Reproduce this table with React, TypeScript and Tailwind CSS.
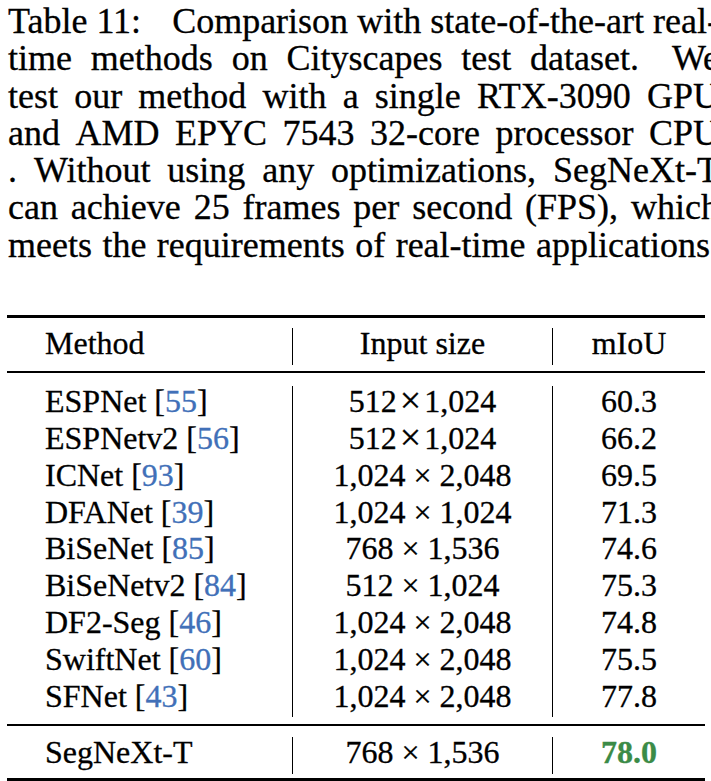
const caption: { words: string[]; wide?: number }[] = [
  { words: ["Table 11:", "Comparison", "with", "state-of-the-art", "real-"], wide: 0 },
  { words: ["time", "methods", "on", "Cityscapes", "test", "dataset.", "We"], wide: 5 },
  { words: ["test", "our", "method", "with", "a", "single", "RTX-3090", "GPU"] },
  { words: ["and", "AMD", "EPYC", "7543", "32-core", "processor", "CPU"] },
  { words: [".", "Without", "using", "any", "optimizations,", "SegNeXt-T"] },
  { words: ["can", "achieve", "25", "frames", "per", "second", "(FPS),", "which"] },
  { words: ["meets", "the", "requirements", "of", "real-time", "applications."] },
];

type Row = { name: string; cite?: string; size: React.ReactNode; miou: string };

const Times = ({ a, b }: { a: string; b: string }) => (
  <>
    {a} × {b}
  </>
);

// math-mode product sign: a touch larger, tighter spacing
const MathTimes = ({ a, b }: { a: string; b: string }) => (
  <>
    {a}
    <span className="mx-[3px] text-[38px] leading-[0px] relative top-[1px]">×</span>
    {b}
  </>
);

const rows: Row[] = [
  { name: "ESPNet", cite: "55", size: <MathTimes a="512" b="1,024" />, miou: "60.3" },
  { name: "ESPNetv2", cite: "56", size: <MathTimes a="512" b="1,024" />, miou: "66.2" },
  { name: "ICNet", cite: "93", size: <Times a="1,024" b="2,048" />, miou: "69.5" },
  { name: "DFANet", cite: "39", size: <Times a="1,024" b="1,024" />, miou: "71.3" },
  { name: "BiSeNet", cite: "85", size: <Times a="768" b="1,536" />, miou: "74.6" },
  { name: "BiSeNetv2", cite: "84", size: <Times a="512" b="1,024" />, miou: "75.3" },
  { name: "DF2-Seg", cite: "46", size: <Times a="1,024" b="2,048" />, miou: "74.8" },
  { name: "SwiftNet", cite: "60", size: <Times a="1,024" b="2,048" />, miou: "75.5" },
  { name: "SFNet", cite: "43", size: <Times a="1,024" b="2,048" />, miou: "77.8" },
];

function TableRow({ first, mid, last }: { first: React.ReactNode; mid: React.ReactNode; last: React.ReactNode }) {
  return (
    <>
      <div className="h-[36.8px] leading-[30px] pl-[38px] whitespace-nowrap">{first}</div>
      <div className="h-[36.8px] leading-[30px] border-x border-black text-center whitespace-nowrap">{mid}</div>
      <div className="h-[36.8px] leading-[30px] text-center whitespace-nowrap">{last}</div>
    </>
  );
}

export default function App() {
  return (
    <div className="w-[711px] h-[781px] overflow-hidden bg-white text-black [font-family:Liberation_Serif,Tinos,Times_New_Roman,serif] [-webkit-text-stroke:0.3px_currentColor]">
      {/* Caption */}
      <div className="pt-[3px] pl-[8px] text-[36px] leading-[37.3px]">
        {caption.map((line, i) => (
          <div key={i} className="w-[711px] h-[37.3px] flex justify-between whitespace-nowrap">
            {line.words.map((w, j) => (
              <span
                key={j}
                className={
                  line.wide === j && i === 0 ? "mr-[22px]" : line.wide === j ? "mr-[14px]" : ""
                }
              >
                {w}
              </span>
            ))}
          </div>
        ))}
      </div>

      {/* Table */}
      <div className="mt-[50.9px] ml-[7px] w-[698px] text-[32px]">
        <div className="h-[3px] bg-black" />
        <div className="mt-[10.2px] grid grid-cols-[285px_261px_152px]">
          <TableRow first="Method" mid="Input size" last="mIoU" />
        </div>
        <div className="mt-[6px] h-[2px] bg-black" />
        <div className="mt-[13.2px] grid grid-cols-[285px_261px_152px]">
          {rows.map(r => (
            <TableRow
              key={r.name}
              first={
                <>
                  {r.name} [<span className="text-[#4170b8]">{r.cite}</span>]
                </>
              }
              mid={r.size}
              last={r.miou}
            />
          ))}
        </div>
        <div className="mt-[6.6px] h-[2px] bg-black" />
        <div className="mt-[11.2px] grid grid-cols-[285px_261px_152px]">
          <TableRow
            first="SegNeXt-T"
            mid={<Times a="768" b="1,536" />}
            last={<span className="font-bold text-[#3b8b47]">78.0</span>}
          />
        </div>
        <div className="mt-[4px] h-[3px] bg-black" />
      </div>
    </div>
  );
}
